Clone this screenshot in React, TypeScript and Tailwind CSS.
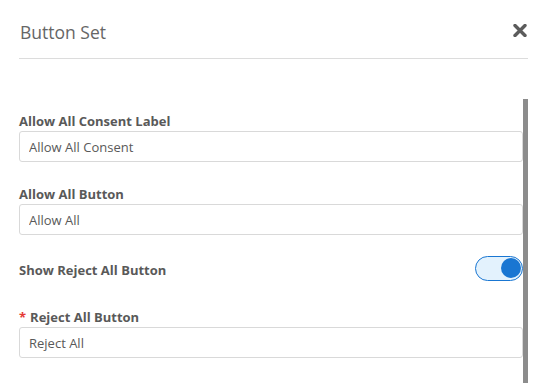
import { useState } from 'react';

const Field = ({ label, value, required }: { label: string; value: string; required?: boolean }) => (
    <div className="flex flex-col">
        <label className="text-[13px] font-bold text-[#595959] leading-[18px] mb-[1px]">
            {required ? <span className="text-[#e53935] mr-[4px]">*</span> : null}
            {label}
        </label>
        <input
            readOnly
            value={value}
            className="h-[31px] w-full rounded-[3px] border border-[#d9d9d9] bg-white px-[9px] text-[13px] text-[#595959] outline-none"
        />
    </div>
);

export default function App() {
    const [on, setOn] = useState(true);

    return (
        <div className="h-[383px] w-[547px] overflow-hidden bg-white" style={{ fontFamily: '"Open Sans", "Noto Sans", sans-serif' }}>
            <div className="mx-[19px] flex h-[59px] items-center justify-between border-b border-[#dcdcdc] pl-[1px]">
                <h1 className="text-[17.5px] text-[#666666] mt-[7px]">Button Set</h1>
                <button className="mr-[1px] mt-[2px] text-[#5c5c5c]" aria-label="close">
                    <svg width="14" height="13" viewBox="0 0 14 13">
                        <path d="M2 1.5 L12 11.5 M12 1.5 L2 11.5" stroke="currentColor" strokeWidth="3.4" strokeLinecap="round" />
                    </svg>
                </button>
            </div>

            <div className="mt-[40px] flex pl-[19px]">
                <div className="flex w-[504px] flex-col pt-[13px]">
                    <Field label="Allow All Consent Label" value="Allow All Consent" />
                    <div className="h-[23px]" />
                    <Field label="Allow All Button" value="Allow All" />
                    <div className="mt-[21px] flex h-[25px] items-center justify-between">
                        <span className="text-[13px] font-bold text-[#595959] mt-[5px]">Show Reject All Button</span>
                        <button
                            onClick={() => setOn(!on)}
                            className="relative h-[25px] w-[48px] rounded-full border-[1.5px] border-[#1976d2] bg-[#e3f2fd]"
                        >
                            <span className={`absolute top-[1px] h-[20px] w-[20px] rounded-full bg-[#1976d2] ${on ? 'right-[1px]' : 'left-[1px]'}`} />
                        </button>
                    </div>
                    <div className="h-[27px]" />
                    <Field label="Reject All Button" value="Reject All" required />
                </div>
                <div className="h-[300px] w-[5px] bg-[#8c8c8c]" />
            </div>
        </div>
    );
}
